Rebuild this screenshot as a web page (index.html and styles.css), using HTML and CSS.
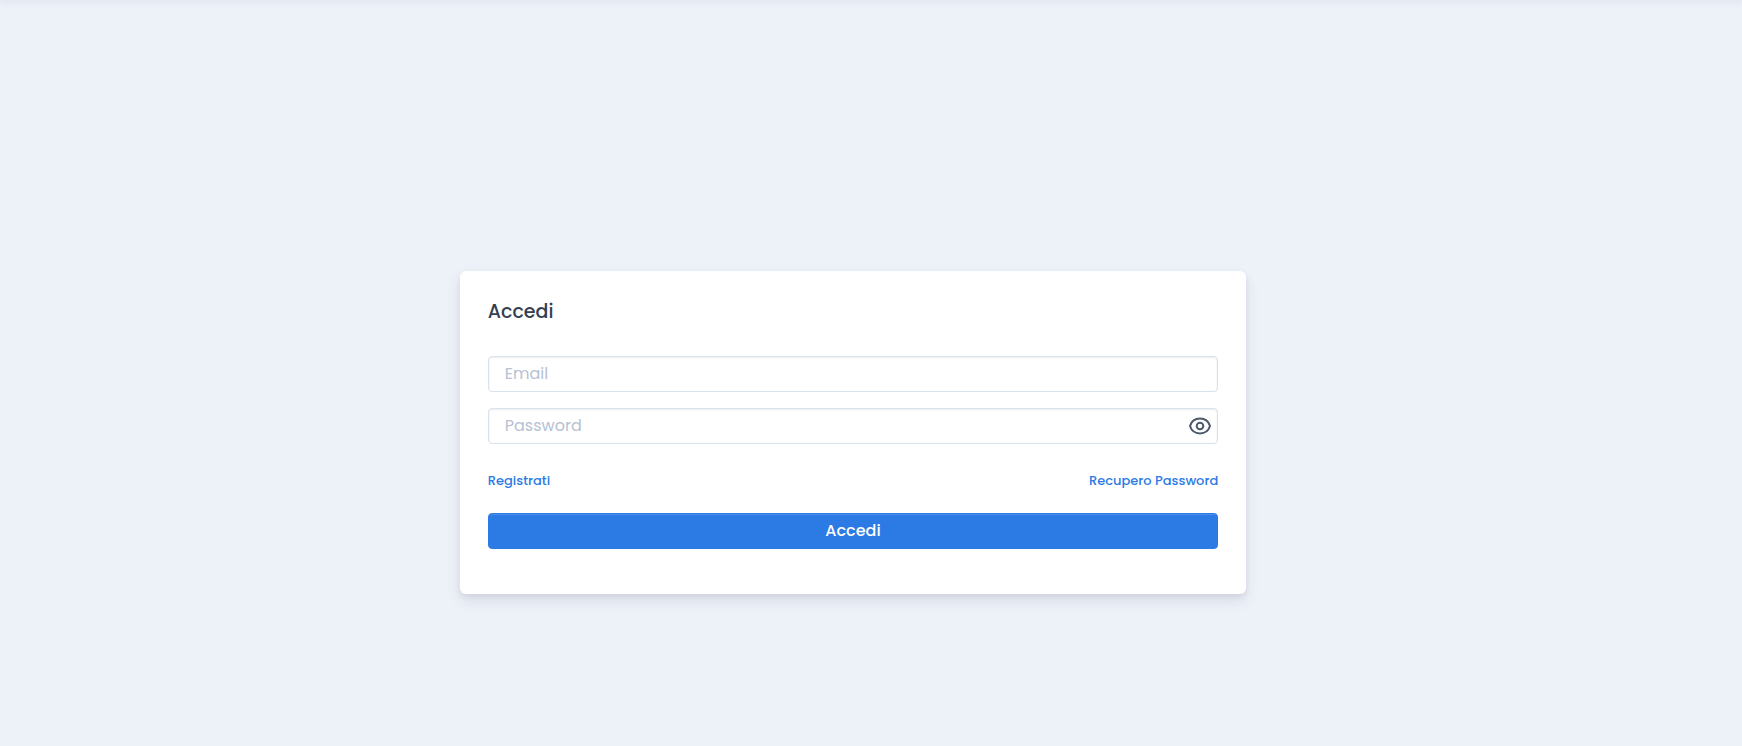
FILE: index.html
```html
<!DOCTYPE html>
<html lang="it">
<head>
    <meta charset="UTF-8">
    <meta name="viewport" content="width=device-width, initial-scale=1">
    <title>Accedi</title>
    <link rel="stylesheet" href="styles.css">
</head>
<body>
    <header class="topbar"></header>
    <main class="page">
        <div class="card">
            <h1 class="card-title">Accedi</h1>
            <form>
                <div class="field">
                    <input class="form-control" type="email" name="email" placeholder="Email" aria-label="Email">
                </div>
                <div class="field">
                    <input class="form-control with-icon" type="password" id="password" name="password" placeholder="Password" aria-label="Password">
                    <button class="toggle-password" type="button" aria-label="Mostra password">
                        <svg viewBox="0 0 24 24" width="24" height="24" fill="none" stroke="currentColor" stroke-width="2">
                            <path d="M2 12C3.500 7.200 7.400 4.600 12 4.600S20.500 7.200 22 12C20.500 16.800 16.600 19.400 12 19.400S3.500 16.800 2 12Z"/>
                            <circle cx="12" cy="12" r="3.300"/>
                        </svg>
                    </button>
                </div>
                <div class="links">
                    <a href="#">Registrati</a>
                    <a href="#">Recupero Password</a>
                </div>
                <button class="btn-primary" type="submit">Accedi</button>
            </form>
        </div>
    </main>

    <script>
        document.querySelector('.toggle-password').addEventListener('click', function () {
            const input = document.getElementById('password');
            input.type = input.type === 'password' ? 'text' : 'password';
        });
    </script>
</body>
</html>
```
FILE: styles.css
```css
* {
    box-sizing: border-box;
}
body {
    margin: 0;
    background-color: #edf2f9;
    color: #344050;
    font-family: Poppins, Inter, sans-serif;
    font-size: 16px;
}
.topbar {
    height: 0;
    box-shadow: 0 0 7px 1px rgba(65, 69, 88, 0.2);
}
.page {
    display: flex;
    align-items: center;
    justify-content: center;
    min-height: 100vh;
    padding: 119px 36px 0 0;
}
.card {
    width: 46.1%;
    min-width: 320px;
    padding: 28px 28px 45px;
    background-color: #fff;
    border-radius: 6px;
    box-shadow: 0 7px 14px 0 rgba(65, 69, 88, 0.1), 0 3px 6px 0 rgba(0, 0, 0, 0.07);
}
.card-title {
    margin: 0 0 32px;
    font-size: 19px;
    font-weight: 500;
    line-height: 25px;
}
.field {
    position: relative;
    margin-bottom: 16px;
}
.form-control {
    display: block;
    width: 100%;
    height: 36px;
    padding: 0 16px 2px;
    border: 1px solid #d8e2ef;
    border-radius: 4px;
    background-color: #fff;
    box-shadow: inset 0 1px 2px rgba(0, 0, 0, 0.075);
    color: #344050;
    font: inherit;
}
.form-control::placeholder {
    color: #b6c1d2;
    opacity: 1;
}
.with-icon {
    padding-right: 40px;
}
.toggle-password {
    position: absolute;
    top: 6px;
    right: 6px;
    width: 24px;
    height: 24px;
    padding: 0;
    border: none;
    background: none;
    color: #4d5969;
    cursor: pointer;
}
.toggle-password svg {
    display: block;
}
.links {
    display: flex;
    justify-content: space-between;
    margin: 27px 0 22px;
    font-size: 13px;
    font-weight: 500;
    line-height: 20px;
}
.links a {
    color: #2c7be5;
    text-decoration: none;
}
.links a:hover {
    text-decoration: underline;
}
.btn-primary {
    display: block;
    width: 100%;
    height: 36px;
    padding: 0 16px 2px;
    border: 1px solid #2c7be5;
    border-radius: 4px;
    background-color: #2c7be5;
    box-shadow: inset 0 1px 0 rgba(255, 255, 255, 0.15);
    color: #fff;
    font: inherit;
    font-weight: 500;
    cursor: pointer;
}
.btn-primary:hover {
    background-color: #2569c3;
}
```
